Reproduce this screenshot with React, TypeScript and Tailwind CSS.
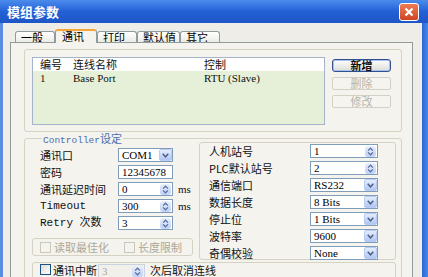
import React from "react";

const cjk = "font-['Noto_Sans_CJK_SC',sans-serif]";
const serif = "font-['Liberation_Serif','Noto_Sans_CJK_SC',serif]";
const mono = "font-['Liberation_Mono','Noto_Sans_CJK_SC',monospace]";

function Arrow() {
  return (
    <div className="w-[13px] h-[12px] rounded-[2px] border border-[#B9CBF3] bg-gradient-to-b from-[#E6EEFE] to-[#B1C6F4] flex items-center justify-center">
      <svg width="7" height="5" viewBox="0 0 7 5">
        <path d="M0.7 0.8 L3.5 3.8 L6.3 0.8" fill="none" stroke="#4D6185" strokeWidth="1.5" />
      </svg>
    </div>
  );
}

function Spin() {
  return (
    <div className="w-[11px] h-[11px] mr-[1px] rounded-[3px] bg-gradient-to-b from-[#E8EFFD] to-[#BDD0F6] flex items-center justify-center">
      <svg width="7" height="9" viewBox="0 0 7 9">
        <path d="M1 3.6 L3.5 1.2 L6 3.6 M1 5.4 L3.5 7.8 L6 5.4" fill="none" stroke="#5A6E9A" strokeWidth="1.2" />
      </svg>
    </div>
  );
}

type FieldProps = { value: string; kind?: "text" | "combo" | "spin"; className: string; disabled?: boolean };

function Field({ value, kind = "text", className, disabled }: FieldProps) {
  return (
    <div
      className={`h-[14px] border flex items-center ${className} ${
        disabled ? "border-[#C9D3E2] bg-[#F1F0EB]" : "border-[#7F9DB9] bg-white"
      }`}
    >
      <span className={`flex-1 pl-[3px] text-[11px] leading-none ${serif} ${disabled ? "text-[#ACA899]" : "text-black"}`}>
        {value}
      </span>
      {kind === "combo" && <Arrow />}
      {kind === "spin" && <Spin />}
    </div>
  );
}

function Tab({ label, active, w }: { label: string; active?: boolean; w: string }) {
  if (active) {
    return (
      <div
        className={`${w} h-[14px] -mb-px relative z-10 bg-[#F4F3EE] border border-b-0 border-[#919B9C] border-t-2 border-t-[#F3A43A] rounded-t-[3px] pl-[6px] text-[11px] leading-[11px] ${cjk} text-black`}
      >
        {label}
      </div>
    );
  }
  return (
    <div
      className={`${w} h-[11px] bg-gradient-to-b from-white to-[#ECEBE5] border border-b-0 border-[#919B9C] rounded-t-[3px] pl-[5px] text-[11px] leading-[11px] ${cjk} text-black`}
    >
      {label}
    </div>
  );
}

function Row({ label, children, labelClass = cjk }: { label: string; children: React.ReactNode; labelClass?: string }) {
  return (
    <div className="h-[14px] flex items-center">
      <span className={`w-[78px] text-[11px] leading-none text-[#111] ${labelClass}`}>{label}</span>
      {children}
    </div>
  );
}

function RightRow({ label, value, kind }: { label: string; value: string; kind: "combo" | "spin" }) {
  return (
    <div className="h-[14px] flex items-center">
      <span className={`w-[101px] text-[11px] leading-none text-[#111] ${cjk}`}>{label}</span>
      <Field value={value} kind={kind} className="w-[68px]" />
    </div>
  );
}

function Check({ disabled }: { disabled?: boolean }) {
  return (
    <div
      className={`w-[11px] h-[11px] shrink-0 border ${
        disabled ? "border-[#CAC8BB] bg-[#F4F3EE]" : "border-[#1C5180] bg-gradient-to-br from-[#DCDCD7] to-white"
      }`}
    />
  );
}

export default function App() {
  return (
    <div className="w-[428px] h-[277px] overflow-hidden flex flex-col bg-[#1E5CD2]">
      {/* title bar */}
      <div className="h-[23px] shrink-0 flex items-center justify-between pl-[7px] pr-[9px] bg-gradient-to-b from-[#4B8CEC] via-[#2460D6] to-[#1D56C6]">
        <span className={`text-[13px] font-bold text-white leading-none ${cjk}`}>模组参数</span>
        <div className="w-[20px] h-[18px] rounded-[3px] border border-white bg-gradient-to-b from-[#EE7C55] to-[#CC4422] flex items-center justify-center">
          <svg width="10" height="10" viewBox="0 0 10 10">
            <path d="M1.5 1.5 L8.5 8.5 M8.5 1.5 L1.5 8.5" stroke="white" strokeWidth="2.2" />
          </svg>
        </div>
      </div>

      <div className="flex-1 flex min-h-0">
        <div className="w-[3px] bg-[#5B8CE4]" />
        <div className="flex-1 bg-[#EEEDE8] pl-[7px] pt-[7px] flex flex-col min-h-0">
          {/* tabs */}
          <div className="h-[12px] ml-[5px] flex items-end">
            <Tab label="一般" w="w-[40px]" />
            <Tab label="通讯" w="w-[42px]" active />
            <Tab label="打印" w="w-[40px]" />
            <Tab label="默认值" w="w-[43px]" />
            <Tab label="其它" w="w-[40px]" />
          </div>

          {/* tab panel */}
          <div className="w-[403px] flex-1 border border-b-0 border-[#919B9C] bg-[#F4F3EE] overflow-hidden">
            {/* list section */}
            <div className="ml-[13px] mt-[6px] w-[378px] h-[83px] border border-[#D5D2C4] rounded-[3px] flex pl-[7px] pt-[7px]">
              <div className="w-[293px] h-[68px] border border-[#A5B4C8] bg-[#E6F0D8] flex flex-col">
                <div className={`h-[13px] bg-white flex items-center text-[11px] leading-none ${cjk} text-[#111]`}>
                  <span className="w-[40px] pl-[7px]">编号</span>
                  <span className="w-[131px]">连线名称</span>
                  <span>控制</span>
                </div>
                <div className={`h-[14px] flex items-center text-[11px] leading-none ${serif} text-[#111]`}>
                  <span className="w-[40px] pl-[7px]">1</span>
                  <span className="w-[131px]">Base Port</span>
                  <span>RTU (Slave)</span>
                </div>
              </div>
              <div className="ml-[7px] mt-[2px] flex flex-col gap-[5px]">
                <div
                  className={`w-[59px] h-[13px] rounded-[3px] border border-[#2F4F8F] bg-gradient-to-b from-white to-[#DCDCD8] shadow-[inset_0_0_0_1px_#A8C2EE] flex items-center justify-center text-[11px] font-bold leading-none ${cjk} text-[#111]`}
                >
                  新增
                </div>
                <div
                  className={`w-[59px] h-[13px] rounded-[2px] border border-[#D3D1C6] bg-[#F5F4EF] flex items-center justify-center text-[11px] leading-none ${cjk} text-[#B7B4A8]`}
                >
                  删除
                </div>
                <div
                  className={`w-[59px] h-[13px] rounded-[2px] border border-[#D3D1C6] bg-[#F5F4EF] flex items-center justify-center text-[11px] leading-none ${cjk} text-[#B7B4A8]`}
                >
                  修改
                </div>
              </div>
            </div>

            {/* controller group */}
            <div className="ml-[13px] mt-[6px] w-[378px] h-[160px] border border-[#D5D2C4] rounded-[3px] relative pt-[3px]">
              <span
                className={`absolute -top-[7px] left-[17px] px-[1px] bg-[#F4F3EE] text-[11px] leading-[12px] text-[#4A6CB0] ${cjk}`}
              >
                <span className={`${mono} text-[9.5px]`}>Controller</span>设定
              </span>
              <div className="flex">
                {/* left column */}
                <div className="w-[161px] ml-[7px] pt-[6px]">
                  <div className="pl-[8px] flex flex-col gap-[3px]">
                    <Row label="通讯口">
                      <Field value="COM1" kind="combo" className="w-[55px]" />
                    </Row>
                    <Row label="密码">
                      <Field value="12345678" className="w-[55px]" />
                    </Row>
                    <Row label="通讯延迟时间">
                      <Field value="0" kind="spin" className="w-[55px]" />
                      <span className={`ml-[5px] text-[11px] leading-none ${serif} text-[#111]`}>ms</span>
                    </Row>
                    <Row label="Timeout" labelClass={mono}>
                      <Field value="300" kind="spin" className="w-[55px]" />
                      <span className={`ml-[5px] text-[11px] leading-none ${serif} text-[#111]`}>ms</span>
                    </Row>
                    <Row label="Retry 次数" labelClass={mono}>
                      <Field value="3" kind="spin" className="w-[55px]" />
                    </Row>
                  </div>
                  <div className="mt-[8px] h-[18px] border border-[#D5D2C4] rounded-[3px] flex items-center pl-[7px]">
                    <Check disabled />
                    <span className={`ml-[3px] w-[70px] text-[11px] leading-none ${cjk} text-[#ACA899]`}>读取最佳化</span>
                    <Check disabled />
                    <span className={`ml-[3px] text-[11px] leading-none ${cjk} text-[#ACA899]`}>长度限制</span>
                  </div>
                </div>

                {/* right box */}
                <div className="ml-[6px] w-[197px] h-[118px] border border-[#D5D2C4] rounded-[3px] pl-[9px] pt-[1px] flex flex-col gap-[3px]">
                  <RightRow label="人机站号" value="1" kind="spin" />
                  <RightRow label="PLC默认站号" value="2" kind="spin" />
                  <RightRow label="通信端口" value="RS232" kind="combo" />
                  <RightRow label="数据长度" value="8 Bits" kind="combo" />
                  <RightRow label="停止位" value="1 Bits" kind="combo" />
                  <RightRow label="波特率" value="9600" kind="combo" />
                  <RightRow label="奇偶校验" value="None" kind="combo" />
                </div>
              </div>

              {/* bottom row */}
              <div className="ml-[7px] mt-[2px] w-[364px] h-[24px] border border-[#D5D2C4] rounded-[3px] flex items-start pl-[7px] pt-[1px]">
                <Check />
                <span className={`ml-[2px] w-[45px] text-[11px] leading-[12px] ${cjk} text-[#111]`}>通讯中断</span>
                <Field value="3" kind="spin" className="w-[47px]" disabled />
                <span className={`ml-[5px] text-[11px] leading-[12px] ${cjk} text-[#111]`}>次后取消连线</span>
              </div>
            </div>
          </div>
        </div>
        <div className="w-[6px] bg-gradient-to-r from-[#2A66D8] to-[#4C84E6]" />
      </div>
    </div>
  );
}
